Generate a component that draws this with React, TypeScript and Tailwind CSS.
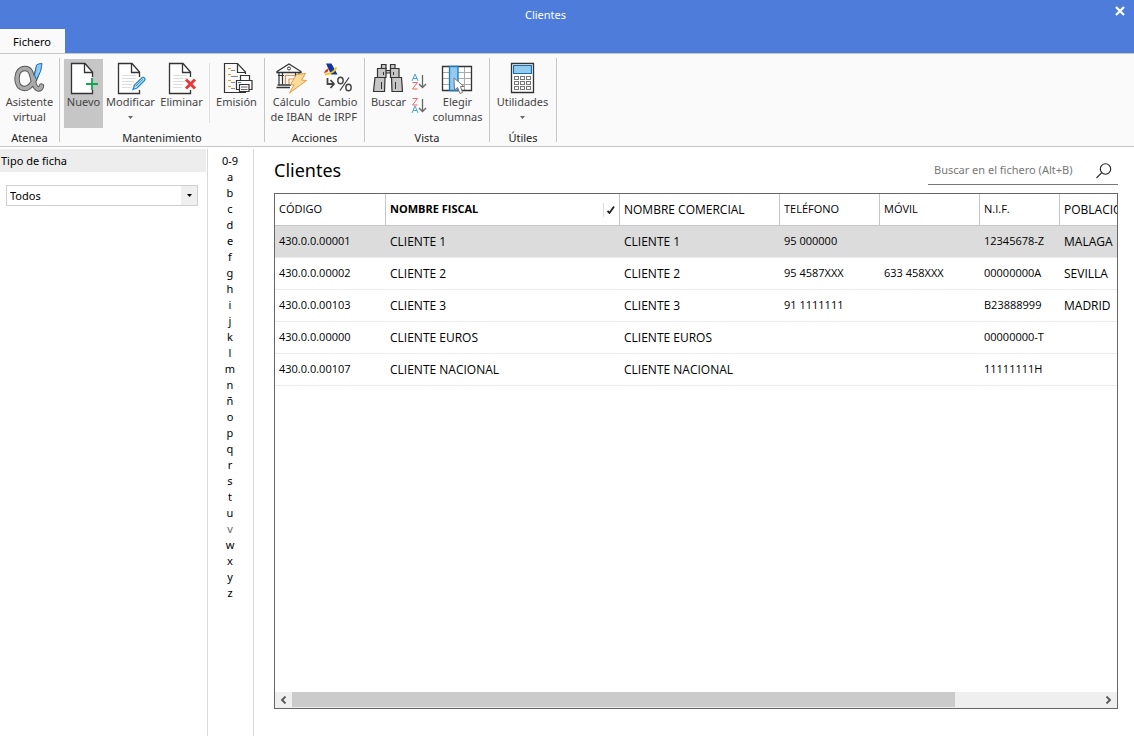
import React from "react";

type Client = {
  code: string;
  fiscal: string;
  comercial: string;
  phone: string;
  mobile: string;
  nif: string;
  city: string;
};

const clients: Client[] = [
  { code: "430.0.0.00001", fiscal: "CLIENTE 1", comercial: "CLIENTE 1", phone: "95 000000", mobile: "", nif: "12345678-Z", city: "MALAGA" },
  { code: "430.0.0.00002", fiscal: "CLIENTE 2", comercial: "CLIENTE 2", phone: "95 4587XXX", mobile: "633 458XXX", nif: "00000000A", city: "SEVILLA" },
  { code: "430.0.0.00103", fiscal: "CLIENTE 3", comercial: "CLIENTE 3", phone: "91 1111111", mobile: "", nif: "B23888999", city: "MADRID" },
  { code: "430.0.0.00000", fiscal: "CLIENTE EUROS", comercial: "CLIENTE EUROS", phone: "", mobile: "", nif: "00000000-T", city: "" },
  { code: "430.0.0.00107", fiscal: "CLIENTE NACIONAL", comercial: "CLIENTE NACIONAL", phone: "", mobile: "", nif: "11111111H", city: "" },
];

const letters = ["0-9", ..."abcdefghijklmnñopqrstuvwxyz"];

/* ---------- icons ---------- */

const Icon = ({ children }: { children: React.ReactNode }) => (
  <svg
    className="w-[31px] h-[31px] shrink-0 overflow-visible"
    viewBox="0 0 31 31"
    fill="none"
    aria-hidden="true"
  >
    {children}
  </svg>
);

const Page = ({ lines = false }: { lines?: boolean }) => (
  <>
    <path d="M3.5.5H17L24.5 9V30.5H3.5Z" fill="#fff" />
    <path
      d="M24.5 14V9L17 .5H3.5V30.5H24.5V27M16.5 .5V9.5H24.5"
      stroke="#333"
      strokeWidth="1.3"
    />
    {lines && (
      <path
        d="M7 12.5H21M7 15.5H21M7 18.5H19M7 21.5H17M7 24.5H16"
        stroke="#ddd"
      />
    )}
  </>
);

const AlphaIcon = () => {
  const d =
    "M24 6C22 16 17 25.5 10.5 25.5C5.5 25.5 3 21 3 15.5C3 9.5 6 5.500 11 5.500C17 5.500 17.500 11 19 17C20.500 23 22 26 24.500 26C26 26 27 25 27.500 23";
  return (
    <Icon>
      <path d={d} stroke="#555" strokeWidth="5.400" strokeLinecap="round" />
      <path d={d} stroke="#aaa" strokeWidth="3.500" strokeLinecap="round" />
      <path
        d="M22.5 2Q24.5 .5 28 .5Q28 8 22.5 16.5L20.5 12Z"
        fill="#8fc9ef"
        stroke="#1c6fb0"
      />
    </Icon>
  );
};

const NewIcon = () => (
  <Icon>
    <Page />
    <path d="M24 15V27M18 21H30" stroke="#12a650" strokeWidth="1.8" />
  </Icon>
);

const EditIcon = () => (
  <Icon>
    <Page lines />
    <path
      d="M18 26.5L19.5 22L27 14.7Q28.5 14 29.5 15.2Q30.5 16.5 29.5 17.5L22 25Z"
      fill="#d6ecfa"
      stroke="#1f86c9"
      strokeWidth="1.3"
    />
    <path d="M20.5 23.5L28 16.3" stroke="#1f86c9" />
  </Icon>
);

const DeleteIcon = () => (
  <Icon>
    <Page lines />
    <path d="M20 16.5L29 25.5M29 16.5L20 25.5" stroke="#e8383b" strokeWidth="3" />
  </Icon>
);

const PrintIcon = () => (
  <Icon>
    <path d="M24.5 11V9L16.5 .5H3.5V29.5H25" stroke="#333" strokeWidth="1.2" />
    <path d="M16.5 .5V9.5H24.5" stroke="#333" strokeWidth="1.2" />
    <path d="M7 5.5H10M7 11.5H10M7 17.5H10M7 23.5H10" stroke="#f39a2b" strokeWidth="1.2" />
    <path d="M10 7.5H14M10 13.5H17M10 19.5H14M10 25.5H14" stroke="#888" />
    <path d="M19.5 17V12.5H28.5V17" fill="#fff" stroke="#333" strokeWidth="1.2" />
    <path d="M15.5 17.5H31V26.5H15.5Z" fill="#fff" stroke="#333" strokeWidth="1.2" />
    <path d="M18.5 21.5H28V28.5H18.5Z" fill="#fff" stroke="#333" strokeWidth="1.2" />
    <path d="M20 24H26.5M20 26.5H26.5" stroke="#666" />
    <path d="M17 19.5H20" stroke="#2b8fd6" />
  </Icon>
);

const BankIcon = () => (
  <Icon>
    <path d="M1 8.5L13 1L25 8.5V9.5H1Z" stroke="#333" strokeWidth="1.3" />
    <circle cx="13" cy="5.5" r="1.5" stroke="#333" />
    <path
      d="M3 10V21.5M6.500 10V21.5M19.5 10V14M23 10V12M2 12.5H8M18.5 12.5H24.5"
      stroke="#333"
      strokeWidth="1.200"
    />
    <path d="M1.5 22H15M.5 24.5H14" stroke="#333" strokeWidth="1.3" />
    <path d="M9.5 21V12.5H18M13 21V16H18" stroke="#e39152" strokeWidth="1.2" />
    <path
      d="M20.5 11.5L29.5 10.5L25.5 17L30.5 17.5L13.5 30L18 22L14.5 21.5Z"
      fill="#fbdc9b"
      stroke="#e39a45"
    />
  </Icon>
);

const TaxIcon = () => (
  <Icon>
    <path d="M4 .5H9.5L15.5 11.5H9Z" fill="#12379c" />
    <path d="M2 10.5Q3 6 7 5.5L5.5 9Q4 9 2 10.5Z" fill="#e5302a" />
    <path d="M3 11.5Q11 11 14.5 4.5" stroke="#fcc417" strokeWidth="1.8" />
    <path d="M5.5 15V21H11.5M8.5 17L12 21L8.5 25" stroke="#444" strokeWidth="1.8" />
    <path d="M27 14.5L18 27.5" stroke="#444" strokeWidth="1.3" />
    <ellipse cx="18.5" cy="17.5" rx="2.7" ry="3.3" stroke="#444" strokeWidth="1.4" />
    <ellipse cx="26.5" cy="24.5" rx="2.7" ry="3.3" stroke="#444" strokeWidth="1.4" />
  </Icon>
);

const BinocularsIcon = () => (
  <Icon>
    <g fill="#c6c6c6" stroke="#333" strokeWidth="1.2">
      <path d="M8.5 1.5H13V5.5H8.5ZM17.5 1.5H22V5.5H17.5Z" />
      <path d="M12.5 7.5H17.5V10H12.5Z" />
      <path d="M4.5 5.5H13V14.5H4.5ZM17.5 5.5H26V14.5H17.5Z" />
      <path d="M2 14.5H12L11.5 28.5H.5ZM18.5 14.5H28.5L29.5 28.5H19Z" />
    </g>
    <path d="M10.5 9V12M20.5 9V12M8.5 19V26M22.5 19V26" stroke="#333" />
  </Icon>
);

const ColumnsIcon = () => (
  <Icon>
    <path d="M.5 3.5H29.5V27.5H.5Z" fill="#fff" />
    <path d="M1 9.5H29M1 15.5H29M1 21.5H29M22.5 4V27" stroke="#aaa" />
    <path d="M.5 3.5H29.5V27.5H.5Z" stroke="#333" strokeWidth="1.3" />
    <path d="M7.5 3.5H16V27.5H7.5Z" fill="#93caf0" stroke="#1a78bd" strokeWidth="1.3" />
    <path
      d="M12 15L12.5 27L15.5 24.5L18 30.5L20.5 29.5L18.5 23.5H22Z"
      fill="#fff"
      stroke="#777"
    />
  </Icon>
);

const CalculatorIcon = () => (
  <Icon>
    <path d="M4.5 .5H26.5V29.5H4.5Z" fill="#fff" stroke="#333" strokeWidth="1.3" />
    <path d="M6.5 2.5H24.5V10.5H6.5Z" fill="#93caf0" stroke="#1a6fb0" strokeWidth="1.2" />
    {[13.5, 18.5, 23.5].map((y) =>
      [7.5, 13.5, 19.5].map((x) => (
        <rect key={`${x}-${y}`} x={x} y={y} width="4" height="3" stroke="#777" />
      ))
    )}
  </Icon>
);

const SortIcon = ({ desc = false }: { desc?: boolean }) => {
  const a = "M0 0L3 -7L6 0M1 -2.5H5";
  const z = "M0.5 -6.5H5.5L0.5 0H5.5";
  return (
    <svg className="w-4 h-4 overflow-visible" viewBox="0 0 16 16" fill="none" aria-hidden="true">
      <g transform="translate(0 7)">
        <path d={desc ? z : a} stroke={desc ? "#e8676a" : "#4ba3dc"} />
      </g>
      <g transform="translate(0 15)">
        <path d={desc ? a : z} stroke={desc ? "#4ba3dc" : "#e8676a"} />
      </g>
      <path d="M10.5 1V13.5M7 10L10.5 13.5L14 10" stroke="#666" strokeWidth="1.3" />
    </svg>
  );
};

const SearchIcon = () => (
  <svg className="w-4 h-4" viewBox="0 0 16 16" fill="none" aria-hidden="true">
    <circle cx="9.5" cy="6" r="5.2" stroke="#222" strokeWidth="1.1" />
    <path d="M5.8 9.7L.5 15" stroke="#222" strokeWidth="1.1" />
  </svg>
);

const Chevron = ({ right = false }: { right?: boolean }) => (
  <svg className="w-[7px] h-2" viewBox="0 0 7 8" fill="none" aria-hidden="true">
    <path d={right ? "M1.5 .5L5 4L1.5 7.5" : "M5.5 .5L2 4L5.5 7.5"} stroke="#555" strokeWidth="1.8" />
  </svg>
);

const Caret = ({ color }: { color: string }) => (
  <svg className="w-[5px] h-[3px]" viewBox="0 0 5 3" aria-hidden="true">
    <path d="M0 0H5L2.5 3Z" fill={color} />
  </svg>
);

/* ---------- ribbon ---------- */

interface RibbonButtonProps {
  icon: React.ReactNode;
  lines: string[];
  width: string;
  active?: boolean;
  menu?: boolean;
}

const RibbonButton = ({ icon, lines, width, active, menu }: RibbonButtonProps) => (
  <button
    type="button"
    className={`${width} h-[69px] pt-1 flex flex-col items-center shrink-0 text-[#444] leading-[15px] whitespace-nowrap ${
      active ? "bg-[#c6c6c6]" : "hover:bg-gray-200"
    }`}
  >
    {icon}
    {lines.map((line) => (
      <span key={line}>{line}</span>
    ))}
    {menu && (
      <span className="pt-[7px]">
        <Caret color="#666" />
      </span>
    )}
  </button>
);

const RibbonGroup = ({ title, children }: { title: string; children: React.ReactNode }) => (
  <>
    <section className="flex flex-col pt-px shrink-0">
      <div className="flex h-[70px] px-1">{children}</div>
      <h2 className="mt-px text-center leading-4 text-[#222]">{title}</h2>
    </section>
    <div className="w-px h-[84px] shrink-0 bg-[#c6c6c6]" />
  </>
);

const Ribbon = () => (
  <div className="flex items-start pt-1 bg-[#fafafa] border-y border-[#c6c6c6] overflow-hidden">
    <RibbonGroup title="Atenea">
      <RibbonButton icon={<AlphaIcon />} lines={["Asistente", "virtual"]} width="w-[51px]" />
    </RibbonGroup>
    <RibbonGroup title="Mantenimiento">
      <RibbonButton icon={<NewIcon />} lines={["Nuevo"]} width="w-[39px]" active />
      <RibbonButton icon={<EditIcon />} lines={["Modificar"]} width="w-[55px]" menu />
      <RibbonButton icon={<DeleteIcon />} lines={["Eliminar"]} width="w-[47px]" />
      <div className="w-px h-[60px] mt-1 ml-1 mr-[3px] bg-[#e0e0e0]" />
      <RibbonButton icon={<PrintIcon />} lines={["Emisión"]} width="w-[47px]" />
    </RibbonGroup>
    <RibbonGroup title="Acciones">
      <div className="flex gap-px">
        <RibbonButton icon={<BankIcon />} lines={["Cálculo", "de IBAN"]} width="w-[45px]" />
        <RibbonButton icon={<TaxIcon />} lines={["Cambio", "de IRPF"]} width="w-[45px]" />
      </div>
    </RibbonGroup>
    <RibbonGroup title="Vista">
      <RibbonButton icon={<BinocularsIcon />} lines={["Buscar"]} width="w-[39px]" />
      <div className="w-6 pt-[15px] flex flex-col items-center gap-2">
        <button type="button" aria-label="Orden ascendente">
          <SortIcon />
        </button>
        <button type="button" aria-label="Orden descendente">
          <SortIcon desc />
        </button>
      </div>
      <div className="pr-0.5">
        <RibbonButton icon={<ColumnsIcon />} lines={["Elegir", "columnas"]} width="w-[51px]" />
      </div>
    </RibbonGroup>
    <RibbonGroup title="Útiles">
      <div className="pr-px">
        <RibbonButton icon={<CalculatorIcon />} lines={["Utilidades"]} width="w-[57px]" menu />
      </div>
    </RibbonGroup>
  </div>
);

/* ---------- table ---------- */

const th = "px-1 border-r border-b border-[#c6c6c6] font-normal text-left whitespace-nowrap";
const td = "px-1 border-b border-[#ececec] whitespace-nowrap";

const ClientsTable = () => {
  const [selected, setSelected] = React.useState(0);

  return (
    <div className="flex-1 min-h-0 flex flex-col border border-[#666]">
      <div className="flex-1 min-h-0 overflow-hidden">
        <table className="w-[1060px] table-fixed border-separate border-spacing-0 text-xs font-['Open_Sans','Noto_Sans',sans-serif]">
          <colgroup>
            <col className="w-[111px]" />
            <col className="w-[234px]" />
            <col className="w-[160px]" />
            <col className="w-[100px]" />
            <col className="w-[100px]" />
            <col className="w-[80px]" />
            <col />
          </colgroup>
          <thead>
            <tr className="h-8">
              <th className={`${th} text-[11px]`}>CÓDIGO</th>
              <th className="px-1 border-r border-b border-[#c6c6c6] text-left">
                <div className="flex items-center justify-between">
                  <span className="text-[11px] font-bold">NOMBRE FISCAL</span>
                  <span className="h-[14px] pl-[3px] flex items-center border-l border-[#ddd]">
                    <svg className="w-2 h-2" viewBox="0 0 8 8" fill="none" aria-hidden="true">
                      <path d="M.5 5L2.5 7L7 .5" stroke="#222" strokeWidth="1.8" />
                    </svg>
                  </span>
                </div>
              </th>
              <th className={th}>NOMBRE COMERCIAL</th>
              <th className={`${th} text-[11px]`}>TELÉFONO</th>
              <th className={`${th} text-[11px]`}>MÓVIL</th>
              <th className={`${th} text-[11px]`}>N.I.F.</th>
              <th className={th}>POBLACIÓN</th>
            </tr>
          </thead>
          <tbody>
            {clients.map((client, i) => (
              <tr
                key={client.code}
                onClick={() => setSelected(i)}
                className={`h-8 ${i === selected ? "bg-[#dcdcdc]" : "bg-white"}`}
              >
                <td className={`${td} text-[11px]`}>{client.code}</td>
                <td className={td}>{client.fiscal}</td>
                <td className={td}>{client.comercial}</td>
                <td className={`${td} text-[11px]`}>{client.phone}</td>
                <td className={`${td} text-[11px]`}>{client.mobile}</td>
                <td className={`${td} text-[11px]`}>{client.nif}</td>
                <td className={td}>{client.city}</td>
              </tr>
            ))}
          </tbody>
        </table>
      </div>
      {/* horizontal scroll bar */}
      <div className="h-4 flex pb-px bg-[#efefef]">
        <button type="button" aria-label="Izquierda" className="w-[17px] flex items-center justify-center">
          <Chevron />
        </button>
        <div className="flex-1">
          <div className="w-[82%] h-full bg-[#cbcbcb]" />
        </div>
        <button type="button" aria-label="Derecha" className="w-[17px] flex items-center justify-center">
          <Chevron right />
        </button>
      </div>
    </div>
  );
};

const App = () => {
  const [search, setSearch] = React.useState("");

  return (
    <div className="h-screen flex flex-col bg-white text-black text-[11px] font-['Noto_Sans','Open_Sans',sans-serif]">
      <header className="bg-[#4d7cdb]">
        <div className="h-[29px] flex items-center text-white">
          <h1 className="flex-1 pl-3 pt-0.5 text-center">Clientes</h1>
          <button type="button" aria-label="Cerrar" className="self-start p-1.5 pl-9 pr-[9px]">
            <svg className="w-[10px] h-[10px]" viewBox="0 0 10 10" aria-hidden="true">
              <path d="M1 1L9 9M9 1L1 9" stroke="#fff" strokeWidth="2.2" />
            </svg>
          </button>
        </div>
        <button type="button" className="block h-6 w-[65px] pt-0.5 pr-px bg-[#fafafa]">
          Fichero
        </button>
      </header>

      <Ribbon />

      <div className="flex-1 min-h-0 flex pt-0.5">
        <aside className="w-[208px] shrink-0 border-r border-[#d9d9d9]">
          <label htmlFor="tipo" className="block h-[23px] mr-px pl-px leading-[23px] bg-[#ededed]">
            Tipo de ficha
          </label>
          <div className="relative mt-[13px] ml-1.5 mr-[9px]">
            <select
              id="tipo"
              className="block w-full h-[21px] pt-px pl-[3px] appearance-none bg-white border border-[#cfcfcf] outline-none"
            >
              <option>Todos</option>
            </select>
            <span className="absolute top-px bottom-px right-px w-4 flex items-center justify-center bg-[#efefef] pointer-events-none">
              <Caret color="#000" />
            </span>
          </div>
        </aside>

        <nav className="w-[46px] shrink-0 pt-1 pr-px flex flex-col items-center border-r border-[#d9d9d9]">
          {letters.map((letter) => (
            <button
              key={letter}
              type="button"
              className={`h-4 leading-4 ${letter === "v" ? "text-[#666]" : ""}`}
            >
              {letter}
            </button>
          ))}
        </nav>

        <main className="flex-1 min-w-0 flex flex-col pl-5 pr-4 pb-[27px]">
          <div className="flex items-start justify-between pb-2">
            <h2 className="pt-2 text-lg leading-[26px]">Clientes</h2>
            <div className="w-[190px] h-9 pt-2 flex items-center border-b border-[#777]">
              <input
                type="text"
                aria-label="Buscar en el fichero"
                placeholder="Buscar en el fichero (Alt+B)"
                value={search}
                onChange={(e) => setSearch(e.target.value)}
                className="flex-1 min-w-0 pl-1.5 outline-none placeholder:text-[#777]"
              />
              <button type="button" aria-label="Buscar" className="mr-1.5">
                <SearchIcon />
              </button>
            </div>
          </div>
          <ClientsTable />
        </main>
      </div>
    </div>
  );
};

export default App;
